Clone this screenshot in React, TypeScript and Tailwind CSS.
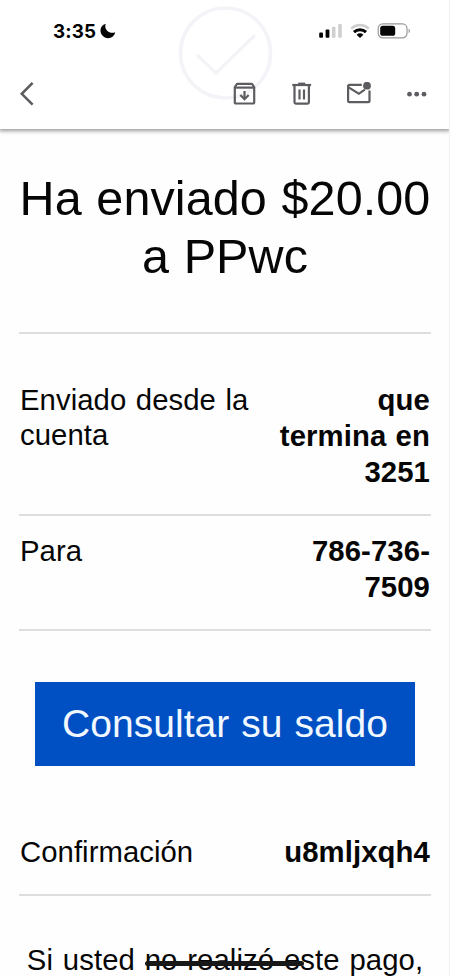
const rows = [
  { label: 'Enviado desde la cuenta', value: 'que termina en 3251' },
  { label: 'Para', value: '786-736-7509' },
];

function StatusBar() {
  return (
    <div className="flex items-center justify-between pt-[19px] pl-[53px] pr-[38px]">
      <div className="flex items-center gap-[4px] h-6">
        <span className="pt-px font-['Inter','Liberation_Sans',sans-serif] text-[18.8px] font-bold leading-6 tracking-[0.2px] text-black">3:35</span>
        <svg width="16" height="16" viewBox="0 0 16 16" fill="#050505">
          <path d="M5.8 .8 C1.6 2 -.4 6 .8 9.6 C2.2 15 8.6 16.8 12.8 13.4 C14 12.4 14.9 11 15.1 9.2 C12.6 10.2 9.4 10 7.4 8 C5.2 6 4.8 3.2 5.8 .8Z" />
        </svg>
      </div>
      <div className="flex items-center h-6">
        {/* Signal */}
        <svg width="24" height="16" viewBox="0 0 24 16">
          <rect x="0.2" y="9.4" width="3.8" height="5.4" rx="1" fill="#050505" />
          <rect x="6.6" y="6.6" width="3.8" height="8.2" rx="1" fill="#050505" />
          <rect x="12.9" y="3.8" width="3.6" height="11" rx="1" fill="#cfcfcf" />
          <rect x="19.2" y="0.9" width="3.6" height="13.9" rx="1" fill="#cfcfcf" />
        </svg>
        {/* Wifi */}
        <svg className="ml-[7px]" width="20" height="16" viewBox="0 0 20 16" fill="none">
          <path d="M1.2 5.6 C6 0.9 14 0.9 18.8 5.6" stroke="#cfcfcf" strokeWidth="2.6" />
          <path d="M4 9.2 C7.3 6 12.7 6 16 9.2" stroke="#050505" strokeWidth="3" />
          <path d="M6.6 11.7 C8.6 9.9 11.4 9.9 13.4 11.7 L10 15Z" fill="#050505" />
        </svg>
        {/* Battery */}
        <svg className="ml-[7px]" width="34" height="16" viewBox="0 0 34 16">
          <rect x="1.2" y="0.8" width="28.8" height="14" rx="4.6" fill="none" stroke="#999" strokeWidth="1.2" />
          <rect x="3.2" y="2.8" width="15" height="10" rx="2.6" fill="#050505" />
          <path d="M31.6 5.7 C33.4 6.2 33.4 9.4 31.6 9.9Z" fill="#999" />
        </svg>
      </div>
    </div>
  );
}

function Toolbar() {
  return (
    <div className="flex items-center pt-[38px] pl-[19px] pr-[22px]">
      <button aria-label="Atrás">
        <svg width="16" height="26" viewBox="0 0 16 26" fill="none" stroke="#5c5d60" strokeWidth="2.6">
          <path d="M13.6 1.8 L2.8 12.8 L13.6 23.6" />
        </svg>
      </button>
      <div className="ml-auto flex items-center">
        <button aria-label="Archivar">
          <svg width="24" height="24" viewBox="0 0 24 24" fill="none" stroke="#5c5d60" strokeWidth="2.2">
            <path d="M1.8 5 L4 1.8 H19 L21.2 5 V20.4 Q21.2 21.5 20.1 21.5 H2.9 Q1.8 21.5 1.8 20.4Z" strokeLinejoin="round" />
            <path d="M1.8 5.6 H21.2" />
            <path d="M11.5 9 V17" />
            <path d="M7.3 13 L11.5 17.1 L15.7 13" />
          </svg>
        </button>
        <button aria-label="Eliminar" className="ml-[33px]">
          <svg width="24" height="24" viewBox="0 0 24 24" fill="none" stroke="#5c5d60" strokeWidth="2.2">
            <path d="M2.3 3 H21.1" />
            <path d="M8.2 1.7 H15.2" />
            <path d="M4.5 3.5 V20.3 Q4.5 21.6 5.8 21.6 H17.6 Q18.9 21.6 18.9 20.3 V3.5" />
            <path d="M9.5 7.4 V17.4 M14 7.4 V17.4" />
          </svg>
        </button>
        <button aria-label="Marcar como no leído" className="ml-[32px]">
          <svg width="26" height="24" viewBox="0 0 26 24" fill="none" stroke="#5c5d60" strokeWidth="2.2">
            <path d="M15.8 2.9 H3.3 Q2.1 2.9 2.1 4.1 V19 Q2.1 20.2 3.3 20.2 H22.3 Q23.5 20.2 23.5 19 V8.6" />
            <path d="M2.6 5.4 L12.8 11.8 L18.8 7.6" />
            <circle cx="21" cy="3.7" r="3.9" fill="#5c5d60" stroke="none" />
          </svg>
        </button>
        <button aria-label="Más" className="ml-[35px]">
          <svg width="20" height="24" viewBox="0 0 20 24" fill="#5c5d60">
            <circle cx="2.5" cy="12.2" r="2.4" />
            <circle cx="9.7" cy="12.2" r="2.4" />
            <circle cx="17" cy="12.2" r="2.4" />
          </svg>
        </button>
      </div>
    </div>
  );
}

export default function App() {
  return (
    <div className="w-[450px] h-[976px] overflow-hidden flex flex-col bg-[#fefefe] border-r border-[#f0f0f0] font-['Liberation_Sans',Arial,sans-serif] text-[#060606]">
      <header className="relative h-[129px] shrink-0 bg-white shadow-[0_1px_4px_1px_rgba(0,0,0,0.4)]">
        {/* Faded check left behind by the scrolled mail */}
        <svg className="absolute left-[178px] top-[5px]" width="96" height="98" viewBox="0 0 96 98" fill="none" stroke="#f4f4f8" strokeWidth="3.6">
          <circle cx="47.5" cy="48" r="45" />
          <path d="M19 50 L38 68 L77 30" />
        </svg>
        <div className="relative">
          <StatusBar />
          <Toolbar />
        </div>
      </header>

      <main className="pl-[19px] pr-[18px]">
        <h1 className="pt-[40px] h-[205px] border-b-2 border-[#dedede] text-center text-[48.5px] leading-[58px] tracking-[0.1px] [word-spacing:1px] whitespace-nowrap">
          Ha enviado $20.00
          <br />a PPwc
        </h1>

        <div className="pt-[33px]">
          {rows.map(row => (
            <div key={row.label} className="flex justify-between pt-[15px] pb-[24px] border-b-2 border-[#dedede] last:pt-[17px]">
              <div className="w-[240px] pl-px text-[29.3px] leading-[35px] tracking-[0.05px] [word-spacing:1.4px]">{row.label}</div>
              <div className="w-[165px] pr-px text-right text-[29.3px] leading-[36px] font-bold tracking-[0.1px] [word-spacing:1px]">{row.value}</div>
            </div>
          ))}
        </div>

        <button className="block mt-[51px] ml-[16px] w-[380px] h-[84px] bg-[#0050c4] text-[39px] leading-[84px] tracking-[0.05px] [word-spacing:1px] whitespace-nowrap text-[#f1f8ff]">
          Consultar su saldo
        </button>

        <div className="flex justify-between mt-[68px] pb-[24px] border-b-2 border-[#dedede] text-[29.3px] leading-[36px]">
          <div className="pl-px tracking-[0.05px]">Confirmación</div>
          <div className="pr-px font-bold tracking-[0.1px]">u8mljxqh4</div>
        </div>

        <p className="mt-[46px] text-center text-[29.3px] leading-[36px] tracking-[0.08px] [word-spacing:1.6px] whitespace-nowrap">
          Si usted{' '}
          <span className="relative">
            no realizó e
            <span className="absolute left-0 -right-[4px] top-[18px] h-[5px] rounded-full bg-[#181818]" />
          </span>
          ste pago,
        </p>
      </main>
    </div>
  );
}
